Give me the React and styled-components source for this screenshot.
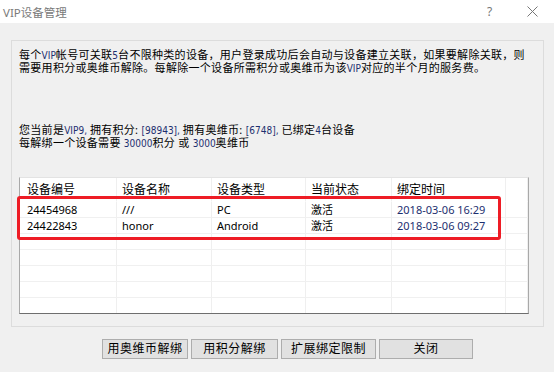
import styled, { createGlobalStyle } from 'styled-components';

const Global = createGlobalStyle`
  html, body {
    margin: 0;
    padding: 0;
    background: #f0f0f0;
  }
  body {
    font-family: "Noto Sans", "Noto Sans CJK SC", sans-serif;
    font-size: 11px;
    color: #000;
  }
`;

const Dialog = styled.div`
  width: 554px;
  height: 372px;
  display: flex;
  flex-direction: column;
  background: #f0f0f0;
  overflow: hidden;
`;
const TitleBar = styled.div`
  height: 23px;
  display: flex;
  align-items: center;
  background: #fff;
  padding-left: 3px;
  color: #7a7a7a;
  font-size: 11.5px;
`;
const Title = styled.div`
  flex: 1;
`;
const TitleBtn = styled.div`
  width: 43px;
  display: flex;
  justify-content: center;
  color: #777;
  font-size: 12px;
`;
const Body = styled.div`
  padding: 17px 10px 0 11px;
`;
const Group = styled.div`
  position: relative;
  height: 287px;
  box-sizing: border-box;
  border: 1px solid #dcdcdc;
  padding: 8px 14px 0 7px;
`;
const Line = styled.div`
  height: 12.5px;
  line-height: 12.5px;
  letter-spacing: 0.3px;
  white-space: nowrap;
  margin-top: ${p => p.$gap || 0}px;
`;
const Num = styled.span`
  color: #1d2f6f;
  letter-spacing: 0;
  line-height: 12px;
  font-family: "DejaVu Sans Condensed", "Noto Sans", sans-serif;
  font-size: 10px;
`;
const Table = styled.div`
  margin-top: 28px;
  height: 137px;
  background: #fff;
  border: 1px solid #a9a9a9;
  border-bottom-color: #6e6e6e;
  border-top-color: #e3e3e3;
  box-sizing: border-box;
  display: grid;
  grid-template-columns: 97px 95px 94px 86px 114px 1fr;
  grid-template-rows: 24px repeat(7, 16px);
  overflow: hidden;
`;
const Cell = styled.div`
  display: flex;
  align-items: center;
  line-height: 12px;
  padding-left: ${p => (p.$first ? 7 : 5)}px;
  border-right: 1px solid #efefef;
  border-bottom: 1px solid ${p => (p.$head ? '#fff' : '#f0f0f0')};
  white-space: nowrap;
  font-size: ${p => (p.$head ? 12 : 11)}px;
  color: ${p => (p.$time ? '#1d2f6f' : '#000')};
`;
const Mark = styled.div`
  position: absolute;
  left: 5px;
  top: 155px;
  width: 478px;
  height: 38px;
  border: 3px solid #ee1c25;
  border-radius: 3px;
`;
const Buttons = styled.div`
  display: flex;
  gap: 3px;
  padding: 12px 0 0 91px;
`;
const Button = styled.button`
  width: ${p => p.$w}px;
  height: 20px;
  background: #e1e1e1;
  border: 1px solid #adadad;
  font-family: inherit;
  font-size: 12px;
  line-height: 16px;
  letter-spacing: 0.5px;
  padding: 0;
  color: #000;
`;

const headers = ['设备编号', '设备名称', '设备类型', '当前状态', '绑定时间', ''];
const rows = [
  ['24454968', '///', 'PC', '激活', '2018-03-06 16:29', ''],
  ['24422843', 'honor', 'Android', '激活', '2018-03-06 09:27', ''],
];
while (rows.length < 7) rows.push(['', '', '', '', '', '']);

export default function App() {
  return (
    <Dialog>
      <Global />
      <TitleBar>
        <Title>VIP设备管理</Title>
        <TitleBtn>?</TitleBtn>
        <TitleBtn>
          <svg width="11" height="11" viewBox="0 0 11 11">
            <path d="M0.5 0.5 L10.5 10.5 M10.5 0.5 L0.5 10.5" stroke="#777" strokeWidth="1" />
          </svg>
        </TitleBtn>
      </TitleBar>
      <Body>
        <Group>
          <Line>
            每个<Num>VIP</Num>帐号可关联<Num>5</Num>台不限种类的设备，用户登录成功后会自动与设备建立关联，如果要解除关联，则
          </Line>
          <Line>
            需要用积分或奥维币解除。每解除一个设备所需积分或奥维币为该<Num>VIP</Num>对应的半个月的服务费。
          </Line>
          <Line $gap={50}>
            您当前是<Num>VIP9, </Num>拥有积分: <Num>[98943], </Num>拥有奥维币: <Num>[6748], </Num>已绑定<Num>4</Num>台设备
          </Line>
          <Line>
            每解绑一个设备需要 <Num>30000</Num>积分 或 <Num>3000</Num>奥维币
          </Line>
          <Table>
            {headers.map((h, i) => (
              <Cell key={'h' + i} $head $first={i === 0}>{h}</Cell>
            ))}
            {rows.map((r, ri) =>
              r.map((c, ci) => (
                <Cell key={ri + '-' + ci} $first={ci === 0} $time={ci === 4}>{c}</Cell>
              ))
            )}
          </Table>
          <Mark />
        </Group>
        <Buttons>
          <Button $w={86}>用奥维币解绑</Button>
          <Button $w={87}>用积分解绑</Button>
          <Button $w={95}>扩展绑定限制</Button>
          <Button $w={94}>关闭</Button>
        </Buttons>
      </Body>
    </Dialog>
  );
}
